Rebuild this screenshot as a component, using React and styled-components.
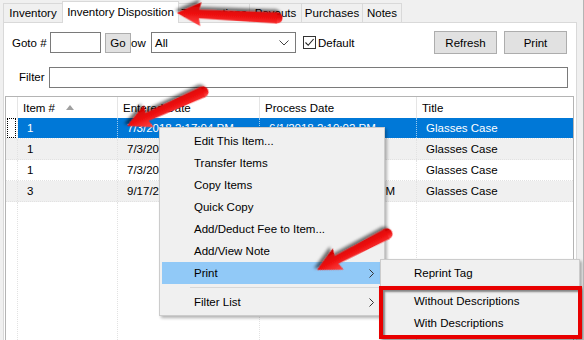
import React from "react";
import styled, { createGlobalStyle, css } from "styled-components";

const GlobalStyle = createGlobalStyle`
  html, body { margin: 0; padding: 0; background: #f0f0f0; }
  body { font-family: "Liberation Sans", Arial, sans-serif; font-size: 11.5px; color: #000; }
  * { box-sizing: border-box; }
`;

const Window = styled.div`
  position: relative;
  width: 584px;
  height: 340px;
  overflow: hidden;
  background: #f0f0f0;
  display: flex;
  flex-direction: column;
  border-right: 1px solid #b4b4b4;
`;

const TabStrip = styled.div`
  display: flex;
  align-items: flex-end;
  height: 22px;
  padding-left: 3px;
  flex-shrink: 0;
`;

const Tab = styled.div`
  position: relative;
  width: ${(p) => p.$w}px;
  height: 19px;
  margin-left: -1px;
  border: 1px solid #d9d9d9;
  border-bottom: none;
  background: #f0f0f0;
  display: flex;
  align-items: center;
  justify-content: center;
  white-space: nowrap;
  &:first-child { margin-left: 0; }
  ${(p) =>
    p.$active &&
    css`
      height: 22px;
      margin-bottom: -1px;
      background: #fff;
      z-index: 2;
      padding-bottom: 2px;
    `}
`;

const Panel = styled.div`
  margin-left: 3px;
  width: 574px;
  height: 330px;
  flex-shrink: 0;
  border: 1px solid #d9d9d9;
  background: #fff;
  display: flex;
  flex-direction: column;
`;

const Toolbar = styled.div`
  display: flex;
  align-items: center;
  height: 23px;
  margin-top: 8px;
  padding: 0 9px 0 8px;
`;

const Label = styled.div`
  width: ${(p) => p.$w}px;
  flex-shrink: 0;
  white-space: nowrap;
  margin-left: ${(p) => p.$ml || 0}px;
`;

const TextBox = styled.div`
  height: 21px;
  width: ${(p) => (p.$w ? `${p.$w}px` : "auto")};
  flex: ${(p) => (p.$w ? "none" : 1)};
  border: 1px solid #7a7a7a;
  background: #fff;
`;

const SmallButton = styled.div`
  position: relative;
  z-index: 1;
  width: 26px;
  height: 20px;
  margin-left: 4px;
  background: #e1e1e1;
  border: 1px solid #adadad;
  display: flex;
  align-items: center;
  justify-content: center;
`;

const Select = styled.div`
  width: 145px;
  height: 21px;
  border: 1px solid #7a7a7a;
  background: #fff;
  display: flex;
  align-items: center;
  padding: 0 6px 0 3px;
  justify-content: space-between;
`;

const CheckBox = styled.div`
  width: 13px;
  height: 13px;
  margin-left: 7px;
  border: 1px solid #333;
  background: #fff;
  display: flex;
  align-items: center;
  justify-content: center;
`;

const Button = styled.div`
  width: 63px;
  height: 23px;
  background: #e1e1e1;
  border: 1px solid #adadad;
  display: flex;
  align-items: center;
  justify-content: center;
  margin-left: ${(p) => (p.$auto ? "auto" : "7px")};
`;

const FilterRow = styled.div`
  display: flex;
  align-items: center;
  height: 22px;
  margin-top: 12px;
  padding: 0 8px 0 15px;
`;

const List = styled.div`
  flex: 1;
  margin: 8px 2px 0 1px;
  border: 1px solid #b4b4b4;
  background: #fff;
  display: flex;
  flex-direction: column;
`;

const cols = "12px 100px 142px 157px 1fr";

const HeaderRow = styled.div`
  display: grid;
  grid-template-columns: ${cols};
  height: 21px;
`;

const HeaderCell = styled.div`
  border-right: 1px solid #e5e5e5;
  padding-left: 5px;
  display: flex;
  align-items: center;
  gap: 11px;
  white-space: nowrap;
  &:last-child { border-right: none; }
`;

const SortArrow = styled.span`
  width: 0;
  height: 0;
  border-left: 4px solid transparent;
  border-right: 4px solid transparent;
  border-bottom: 5px solid #a0a0a0;
  margin-top: -1px;
`;

const Row = styled.div`
  display: grid;
  grid-template-columns: ${cols};
  height: 21px;
  border-bottom: 1px dotted #e2e2e2;
  background: ${(p) => (p.$alt ? "#f0f0f0" : "#fff")};
`;

const Cell = styled.div`
  padding-left: 9px;
  display: flex;
  align-items: center;
  white-space: nowrap;
  overflow: hidden;
  border-right: 1px dotted ${(p) => (p.$sel ? "rgba(255,255,255,0.6)" : "#e2e2e2")};
  background: ${(p) => (p.$sel ? "#0078d7" : "transparent")};
  color: ${(p) => (p.$sel ? "#fff" : "#000")};
  &:last-child { border-right: none; }
`;

const FocusCell = styled.div`
  padding: 0 1px;
  background: #fff;
  border-right: 1px dotted #e2e2e2;
  display: flex;
`;

const FocusRect = styled.div`
  flex: 1;
  border: 1px dotted #000;
`;

const Filler = styled.div`
  flex: 1;
  display: grid;
  grid-template-columns: ${cols};
`;

const FillerCell = styled.div`
  border-right: 1px dotted #e2e2e2;
  &:last-child { border-right: none; }
`;

const Menu = styled.div`
  position: absolute;
  left: ${(p) => p.$x}px;
  top: ${(p) => p.$y}px;
  width: ${(p) => p.$w}px;
  z-index: ${(p) => p.$z || 5};
  background: #f0f0f0;
  border: 1px solid #cccccc;
  padding: 2px;
  box-shadow: 2px 2px 3px rgba(0, 0, 0, 0.3);
`;

const MenuItem = styled.div`
  height: 22px;
  display: flex;
  align-items: center;
  padding-left: ${(p) => p.$pl}px;
  padding-right: 8px;
  white-space: nowrap;
  background: ${(p) => (p.$hl ? "#91c9f7" : "transparent")};
`;

const SubArrow = styled.span`
  margin-left: auto;
  display: flex;
`;

const Separator = styled.div`
  height: ${(p) => p.$h}px;
  display: flex;
  align-items: center;
  padding-left: 28px;
  &::after {
    content: "";
    flex: 1;
    height: 1px;
    background: #d7d7d7;
  }
`;

const RedBox = styled.div`
  position: absolute;
  left: 379px;
  top: 286px;
  width: 203px;
  height: 53px;
  z-index: 8;
  border: 4px solid #e80000;
  box-shadow: inset 2px 2px 2px rgba(0, 0, 0, 0.45), 2px 2px 3px rgba(0, 0, 0, 0.35);
`;

const Overlay = styled.svg`
  position: absolute;
  left: 0;
  top: 0;
  z-index: 10;
  pointer-events: none;
`;

const Chevron = ({ dir = "down" }) =>
  dir === "down" ? (
    <svg width="10" height="6" viewBox="0 0 10 6">
      <polyline points="0.5,0.5 5,5 9.5,0.5" fill="none" stroke="#444" strokeWidth="1" />
    </svg>
  ) : (
    <svg width="5" height="9" viewBox="0 0 5 9">
      <polyline points="0.5,0.5 4.5,4.5 0.5,8.5" fill="none" stroke="#333" strokeWidth="1" />
    </svg>
  );

function Arrow({ from, to }) {
  const [x1, y1] = from;
  const [x2, y2] = to;
  const L = Math.hypot(x2 - x1, y2 - y1);
  const ang = (Math.atan2(y2 - y1, x2 - x1) * 180) / Math.PI;
  const hl = 22,
    hw = 12,
    s1 = 5.5,
    s2 = 4.3;
  const pts = `0,${-s1} ${L - hl},${-s2} ${L - hl - 2},${-hw} ${L},0 ${L - hl - 2},${hw} ${L - hl},${s2} 0,${s1}`;
  return (
    <g transform={`translate(${x1} ${y1}) rotate(${ang})`} filter="url(#shadow)">
      <circle cx="0" cy="0" r={s1} fill="url(#redgrad)" />
      <polygon points={pts} fill="url(#redgrad)" />
    </g>
  );
}

const rows = [
  ["1", "7/3/2018 2:17:04 PM", "6/1/2018 2:10:02 PM", "Glasses Case"],
  ["1", "7/3/2018 2:17:04 PM", "6/1/2018 2:10:02 PM", "Glasses Case"],
  ["1", "7/3/2018 2:17:04 PM", "6/1/2018 2:10:02 PM", "Glasses Case"],
  ["3", "9/17/2018 4:05:12 PM", "10/12/2018 12:41:33 PM", "Glasses Case"],
];

export default function App() {
  return (
    <>
      <GlobalStyle />
      <Window>
        <TabStrip>
          <Tab $w={60}>Inventory</Tab>
          <Tab $w={117} $active>Inventory Disposition</Tab>
          <Tab $w={72}>Transactions</Tab>
          <Tab $w={53}>Payouts</Tab>
          <Tab $w={62}>Purchases</Tab>
          <Tab $w={40}>Notes</Tab>
        </TabStrip>
        <Panel>
          <Toolbar>
            <Label $w={38}>Goto #</Label>
            <TextBox $w={51} />
            <SmallButton>Go</SmallButton>
            <Label $w={34} $ml={-14}>Show</Label>
            <Select>
              <span>All</span>
              <Chevron />
            </Select>
            <CheckBox>
              <svg width="11" height="11" viewBox="0 0 11 11">
                <polyline points="1.5,5.5 4.2,8.3 9.6,2" fill="none" stroke="#222" strokeWidth="1.1" />
              </svg>
            </CheckBox>
            <Label $w={50} $ml={2}>Default</Label>
            <Button $auto>Refresh</Button>
            <Button>Print</Button>
          </Toolbar>
          <FilterRow>
            <Label $w={30}>Filter</Label>
            <TextBox />
          </FilterRow>
          <List>
            <HeaderRow>
              <HeaderCell />
              <HeaderCell>
                Item #<SortArrow />
              </HeaderCell>
              <HeaderCell>Entered Date</HeaderCell>
              <HeaderCell>Process Date</HeaderCell>
              <HeaderCell>Title</HeaderCell>
            </HeaderRow>
            {rows.map((r, i) => {
              const sel = i === 0;
              return (
                <Row key={i} $alt={i % 2 === 1}>
                  {sel ? (
                    <FocusCell>
                      <FocusRect />
                    </FocusCell>
                  ) : (
                    <Cell />
                  )}
                  {r.map((c, j) => (
                    <Cell key={j} $sel={sel}>
                      {c}
                    </Cell>
                  ))}
                </Row>
              );
            })}
            <Filler>
              <FillerCell />
              <FillerCell />
              <FillerCell />
              <FillerCell />
              <FillerCell />
            </Filler>
          </List>
        </Panel>

        <Menu $x={159} $y={127} $w={226}>
          <MenuItem $pl={32}>Edit This Item...</MenuItem>
          <MenuItem $pl={32}>Transfer Items</MenuItem>
          <MenuItem $pl={32}>Copy Items</MenuItem>
          <MenuItem $pl={32}>Quick Copy</MenuItem>
          <MenuItem $pl={32}>Add/Deduct Fee to Item...</MenuItem>
          <MenuItem $pl={32}>Add/View Note</MenuItem>
          <MenuItem $pl={32} $hl>
            Print
            <SubArrow>
              <Chevron dir="right" />
            </SubArrow>
          </MenuItem>
          <Separator $h={7} />
          <MenuItem $pl={32}>
            Filter List
            <SubArrow>
              <Chevron dir="right" />
            </SubArrow>
          </MenuItem>
        </Menu>

        <Menu $x={380} $y={259} $w={200} $z={6}>
          <MenuItem $pl={31}>Reprint Tag</MenuItem>
          <Separator $h={6} />
          <MenuItem $pl={31}>Without Descriptions</MenuItem>
          <MenuItem $pl={31}>With Descriptions</MenuItem>
        </Menu>

        <RedBox />

        <Overlay width="584" height="340" viewBox="0 0 584 340">
          <defs>
            <linearGradient id="redgrad" x1="0" y1="0" x2="0" y2="1">
              <stop offset="0" stopColor="#ff4a4a" />
              <stop offset="0.5" stopColor="#ee0f0f" />
              <stop offset="1" stopColor="#c80000" />
            </linearGradient>
            <filter id="shadow" x="-20%" y="-50%" width="140%" height="200%">
              <feDropShadow dx="2" dy="3" stdDeviation="1.6" floodColor="#000" floodOpacity="0.55" />
            </filter>
          </defs>
          <Arrow from={[277, 18]} to={[177, 13]} />
          <Arrow from={[203, 92]} to={[127, 126]} />
          <Arrow from={[387, 234]} to={[317, 270]} />
        </Overlay>
      </Window>
    </>
  );
}
